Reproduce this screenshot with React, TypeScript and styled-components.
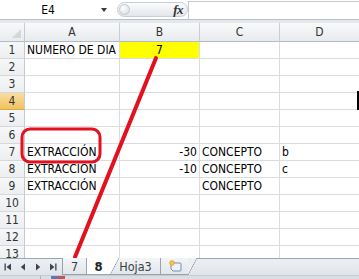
import React from "react";
import styled, { createGlobalStyle } from "styled-components";

const GlobalStyle = createGlobalStyle`
  html, body { margin: 0; padding: 0; background: #fff; overflow: hidden; }
  body { font-family: "DejaVu Sans Condensed", "Liberation Sans", sans-serif; }
`;

const Window = styled.div`
  position: relative;
  width: 359px;
  height: 279px;
  overflow: hidden;
  display: flex;
  flex-direction: column;
  background: #fff;
`;

const FormulaBar = styled.div`
  flex: none;
  height: 20px;
  box-sizing: border-box;
  display: flex;
  align-items: center;
  background: #fff;
  border-bottom: 1px solid #b9c0c9;
`;

const NameBox = styled.div`
  width: 96px;
  text-align: center;
  font-size: 12px;
  color: #000;
`;

const NameArrow = styled.div`
  width: 16px;
  display: flex;
  justify-content: center;
  &::before {
    content: "";
    border-left: 3.5px solid transparent;
    border-right: 3.5px solid transparent;
    border-top: 4px solid #3a3a3a;
  }
`;

const Splitter = styled.div`
  margin-left: 5px;
  width: 71px;
  height: 15px;
  box-sizing: border-box;
  border: 1px solid #c9ced5;
  border-radius: 8px;
  background: linear-gradient(#fbfcfd, #e2e6ea);
  display: flex;
  align-items: center;
  justify-content: space-between;
  padding: 0 4px 0 1px;
`;

const Knob = styled.div`
  width: 11px;
  height: 11px;
  border-radius: 50%;
  border: 1px solid #c3c8ce;
  background: radial-gradient(circle at 35% 35%, #ffffff, #d3d8de);
  box-sizing: border-box;
`;

const Fx = styled.span`
  font-family: "Liberation Serif", serif;
  font-style: italic;
  font-weight: bold;
  font-size: 13px;
  color: #333;
  letter-spacing: -0.5px;
`;

const FormulaInput = styled.div`
  flex: 1;
  align-self: flex-end;
  height: 18px;
  box-sizing: border-box;
  border-top: 1px solid #c4cad2;
  border-left: 1px solid #c4cad2;
  background: #fff;
`;

const Band = styled.div`
  flex: none;
  height: 3px;
  background: #e4e7eb;
`;

const Sheet = styled.div`
  flex: none;
  position: relative;
  width: 440px;
  height: 235px;
  overflow: hidden;
  display: grid;
  grid-template-columns: 25px 95px 80px 80px 80px 80px;
  grid-template-rows: 19px;
  grid-auto-rows: 17px;
`;

const Corner = styled.div`
  position: relative;
  box-sizing: border-box;
  background: linear-gradient(#f7f8f9, #e9ecef);
  border-right: 1px solid #c5cad1;
  border-bottom: 1px solid #b4bbc3;
  &::after {
    content: "";
    position: absolute;
    right: 3px;
    bottom: 3px;
    border-left: 9px solid transparent;
    border-bottom: 9px solid #d3d7dc;
  }
`;

const ColHeader = styled.div`
  box-sizing: border-box;
  background: linear-gradient(#f8f9fa, #e8ebee);
  border-right: 1px solid #c9ced4;
  border-bottom: 1px solid #b4bbc3;
  display: flex;
  align-items: center;
  justify-content: center;
  font-size: 12px;
  color: #333;
`;

const RowHeader = styled.div<{ $active?: boolean }>`
  box-sizing: border-box;
  background: ${(p) =>
    p.$active ? "linear-gradient(#f9dd9f, #f1c25f)" : "linear-gradient(#f6f7f8, #eceef1)"};
  border-right: 1px solid #c5cad1;
  border-bottom: 1px solid ${(p) => (p.$active ? "#d7a94c" : "#d5d9de")};
  display: flex;
  align-items: flex-end;
  justify-content: center;
  padding-bottom: 1px;
  font-size: 12px;
  line-height: 14px;
  color: #333;
`;

const Cell = styled.div<{ $align?: "left" | "right" | "center"; $fill?: string; $selected?: boolean }>`
  position: relative;
  box-sizing: border-box;
  border-right: 1px solid #dadcdd;
  border-bottom: 1px solid #dadcdd;
  background: ${(p) => p.$fill || "#fff"};
  display: flex;
  align-items: flex-end;
  justify-content: ${(p) =>
    p.$align === "right" ? "flex-end" : p.$align === "center" ? "center" : "flex-start"};
  padding: 0 2px 1px 2px;
  font-size: 12px;
  line-height: 14px;
  color: #000;
  white-space: nowrap;
  &::after {
    content: "";
    display: ${(p) => (p.$selected ? "block" : "none")};
    position: absolute;
    left: -3px;
    top: -2px;
    right: -1px;
    bottom: -1px;
    border: 2px solid #000;
  }
`;

const Annotation = styled.svg`
  position: absolute;
  left: 0;
  top: 0;
  pointer-events: none;
`;

const TabBar = styled.div`
  flex: none;
  height: 17px;
  box-sizing: border-box;
  border-top: 1px solid #9da6b0;
  background: linear-gradient(#eceff2, #e1e5ea);
  display: flex;
  align-items: stretch;
`;

const NavGroup = styled.div`
  width: 62px;
  display: flex;
  align-items: center;
`;

const NavButton = styled.div`
  width: 15px;
  display: flex;
  justify-content: center;
  align-items: center;
`;

const Tab = styled.div<{ $active?: boolean; $w: number }>`
  position: relative;
  width: ${(p) => p.$w}px;
  box-sizing: border-box;
  margin-top: -1px;
  border-left: 1px solid #9aa3ad;
  border-bottom: 1px solid #9aa3ad;
  background: ${(p) => (p.$active ? "#fff" : "linear-gradient(#f3f5f7, #e3e7eb)")};
  display: flex;
  align-items: center;
  justify-content: center;
  font-size: ${(p) => (p.$active ? "13px" : "12.5px")};
  font-weight: ${(p) => (p.$active ? "bold" : "normal")};
  color: ${(p) => (p.$active ? "#222" : "#3a3f45")};
  z-index: ${(p) => (p.$active ? 2 : 1)};
  &::after {
    content: "";
    position: absolute;
    right: -9px;
    top: 0;
    bottom: -1px;
    width: 9px;
    background: linear-gradient(
      to bottom right,
      ${(p) => (p.$active ? "#fff" : "#eceff2")} calc(50% - 0.6px),
      #8f99a4 50%,
      transparent calc(50% + 0.6px)
    );
  }
`;

const TabSpacer = styled.div`
  flex: 1;
`;

const StatusStrip = styled.div`
  flex: none;
  height: 4px;
  background: #d9dee4;
  border-top: 1px solid #c4cbd3;
  display: flex;
  box-sizing: border-box;
`;

const StripMark = styled.div`
  margin-left: 40px;
  width: 1px;
  background: #a9b1ba;
`;

const StripIcon = styled.div`
  margin-left: 10px;
  width: 14px;
  background: linear-gradient(90deg, #4f7fc4, #c9524a);
`;

const FirstIcon = () => (
  <svg width="8" height="8" viewBox="0 0 8 8">
    <rect x="0.5" y="0.5" width="1.3" height="7" fill="#3b4550" />
    <polygon points="7,0.5 2.5,4 7,7.5" fill="#3b4550" />
  </svg>
);
const PrevIcon = () => (
  <svg width="6" height="8" viewBox="0 0 6 8">
    <polygon points="5,0.5 0.8,4 5,7.5" fill="#3b4550" />
  </svg>
);
const NextIcon = () => (
  <svg width="6" height="8" viewBox="0 0 6 8">
    <polygon points="1,0.5 5.2,4 1,7.5" fill="#3b4550" />
  </svg>
);
const LastIcon = () => (
  <svg width="8" height="8" viewBox="0 0 8 8">
    <polygon points="1,0.5 5.5,4 1,7.5" fill="#3b4550" />
    <rect x="6.2" y="0.5" width="1.3" height="7" fill="#3b4550" />
  </svg>
);
const NewSheetIcon = () => (
  <svg width="14" height="12" viewBox="0 0 14 12">
    <path d="M3 3 H12 Q13 3 13 4 V10 Q13 11 12 11 H5 L3 9 Z" fill="#eef3fa" stroke="#6f8fb8" strokeWidth="1" />
    <circle cx="4" cy="3" r="2.3" fill="#f7c948" stroke="#e49a1e" strokeWidth="0.8" />
  </svg>
);

type Row = { n: number; a?: string; b?: string; c?: string; d?: string; yellow?: boolean };

const rows: Row[] = [
  { n: 1, a: "NUMERO DE DIA", b: "7", yellow: true },
  { n: 2 },
  { n: 3 },
  { n: 4 },
  { n: 5 },
  { n: 6 },
  { n: 7, a: "EXTRACCIÓN", b: "-30", c: "CONCEPTO", d: "b" },
  { n: 8, a: "EXTRACCION", b: "-10", c: "CONCEPTO", d: "c" },
  { n: 9, a: "EXTRACCIÓN", c: "CONCEPTO" },
  { n: 10 },
  { n: 11 },
  { n: 12 },
  { n: 13 },
];

export default function App() {
  return (
    <>
      <GlobalStyle />
      <Window>
        <FormulaBar>
          <NameBox>E4</NameBox>
          <NameArrow />
          <Splitter>
            <Knob />
            <Fx>fx</Fx>
          </Splitter>
          <FormulaInput />
        </FormulaBar>
        <Band />
        <Sheet>
          <Corner />
          {["A", "B", "C", "D", ""].map((c, i) => (
            <ColHeader key={i}>{c}</ColHeader>
          ))}
          {rows.map((r) => (
            <React.Fragment key={r.n}>
              <RowHeader $active={r.n === 4}>{r.n}</RowHeader>
              <Cell>{r.a}</Cell>
              <Cell
                $align={r.yellow ? "center" : "right"}
                $fill={r.yellow ? "#ffff00" : undefined}
              >
                {r.b}
              </Cell>
              <Cell>{r.c}</Cell>
              <Cell>{r.d}</Cell>
              <Cell $selected={r.n === 4} />
            </React.Fragment>
          ))}
        </Sheet>
        <TabBar>
          <NavGroup>
            <NavButton><FirstIcon /></NavButton>
            <NavButton><PrevIcon /></NavButton>
            <NavButton><NextIcon /></NavButton>
            <NavButton><LastIcon /></NavButton>
          </NavGroup>
          <Tab $w={24}>7</Tab>
          <Tab $w={24} $active>8</Tab>
          <Tab $w={50}>Hoja3</Tab>
          <Tab $w={28}><NewSheetIcon /></Tab>
          <TabSpacer />
        </TabBar>
        <StatusStrip>
          <StripMark />
          <StripIcon />
        </StatusStrip>
        <Annotation width="359" height="279" viewBox="0 0 359 279">
          <rect x="22" y="129" width="78" height="33" rx="8" ry="8" fill="none" stroke="#e3101e" strokeWidth="3" />
          <line x1="156" y1="58" x2="75" y2="257" stroke="#e3101e" strokeWidth="4" strokeLinecap="round" />
        </Annotation>
      </Window>
    </>
  );
}
